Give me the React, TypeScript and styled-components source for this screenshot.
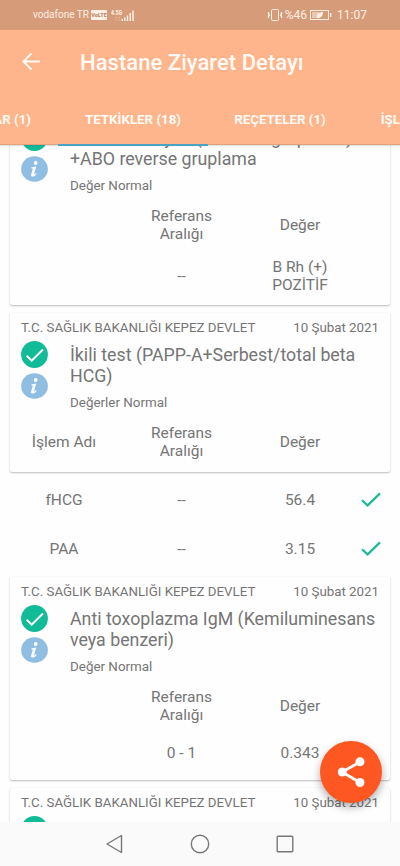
import React from "react";
import styled, { createGlobalStyle } from "styled-components";

const GlobalStyle = createGlobalStyle`
  * { box-sizing: border-box; }
  body { margin: 0; background: #fefefe; font-family: Roboto, sans-serif; color: #757575; }
`;

const Screen = styled.div`
  width: 400px;
  height: 866px;
  display: flex;
  flex-direction: column;
  overflow: hidden;
  position: relative;
  background: #fefefe;
`;

const StatusBar = styled.div`
  height: 30px;
  flex: none;
  display: flex;
  align-items: center;
  background: #d69b78;
  color: #fff0e6;
  padding: 0 33px;
`;

const StatusText = styled.span<{ $size: number; $spacing?: number }>`
  font-size: ${(p) => p.$size}px;
  letter-spacing: ${(p) => p.$spacing ?? 0}px;
  line-height: 30px;
  white-space: nowrap;
`;

const VolteBadge = styled.span`
  width: 16px;
  height: 10px;
  margin: 0 4px 0 2px;
  border-radius: 1px;
  background: #fff0e6;
  color: #c08b6c;
  font-size: 5.5px;
  font-weight: 900;
  line-height: 10px;
  text-align: center;
`;

const StatusIcons = styled.svg`
  display: block;
  flex: none;
`;

const Spacer = styled.div`
  flex: 1;
`;

const AppBar = styled.header`
  height: 115px;
  flex: none;
  background: #ffb58b;
  border-bottom: 1px solid #dfa27f;
  color: #fffaf5;
  position: relative;
  z-index: 1;
  box-shadow: 0 1px 1px rgba(90, 60, 40, 0.15);
`;

const TitleRow = styled.div`
  height: 64px;
  display: flex;
  align-items: center;
  padding-left: 20px;
`;

const PageTitle = styled.h1`
  margin: 0 0 0 37px;
  font-size: 22.1px;
  font-weight: 500;
  line-height: 28px;
  white-space: nowrap;
`;

const Tabs = styled.nav`
  height: 50px;
  display: grid;
  grid-template-columns: 31px 204px 90px 75px;
  align-items: center;
`;

const Tab = styled.span<{ $align: "right" | "center" }>`
  font-size: 13.3px;
  font-weight: 700;
  line-height: 20px;
  display: flex;
  white-space: nowrap;
  padding-top: 1px;
  justify-content: ${(p) => (p.$align === "right" ? "flex-end" : "center")};
`;

const Indicator = styled.div`
  position: absolute;
  left: 58px;
  bottom: -2px;
  width: 150px;
  height: 2px;
  background: #4aa3c2;
`;

const Content = styled.main`
  height: 677px;
  flex: none;
  overflow: hidden;
`;

const List = styled.div`
  margin-top: -49px;
  padding: 0 10px;
`;

const Card = styled.article<{ $height: number }>`
  height: ${(p) => p.$height}px;
  border-radius: 2px;
  background: #fefefe;
  box-shadow: 0 1px 2px rgba(0, 0, 0, 0.25), 0 0 1px rgba(0, 0, 0, 0.1);
  margin-bottom: 8px;
`;

const CardHead = styled.div`
  height: 28px;
  padding: 5px 11px 0 11px;
  display: flex;
  justify-content: space-between;
  font-size: 13.3px;
  line-height: 20px;
  white-space: nowrap;
`;

const CardBody = styled.div`
  height: 77px;
  display: grid;
  grid-template-columns: 27px 1fr;
  column-gap: 22px;
  padding-left: 11px;
`;

const Badges = styled.div`
  display: flex;
  flex-direction: column;
  gap: 5px;
`;

const TestName = styled.h2`
  margin: 3px 0 0;
  font-size: 17.8px;
  font-weight: 400;
  line-height: 21px;
  white-space: nowrap;
`;

const TestNote = styled.p`
  margin: 7px 0 0;
  font-size: 13.4px;
  line-height: 20px;
`;

const Row = styled.div<{ $height: number }>`
  height: ${(p) => p.$height}px;
  display: grid;
  grid-template-columns: 108px 127px 110px 32px;
  align-items: center;
`;

const Cell = styled.div`
  font-size: 15.5px;
  line-height: 18px;
  text-align: center;
  white-space: pre-line;
  display: flex;
  justify-content: center;
`;

const LooseRows = styled.div`
  padding: 3px 0;
  margin: -8px 0 1px;
`;

const ShareButton = styled.button`
  position: absolute;
  left: 320px;
  top: 741px;
  width: 62px;
  height: 62px;
  padding: 0;
  border: 0;
  border-radius: 50%;
  background: #ff5722;
  box-shadow: 0 4px 9px rgba(0, 0, 0, 0.32);
  z-index: 2;
`;

const NavBar = styled.footer`
  height: 44px;
  flex: none;
  background: #fafafa;
  display: grid;
  grid-template-columns: repeat(3, 85px);
  justify-content: center;
  align-items: center;
  justify-items: center;
`;

const OkBadge = () => (
  <svg width="27" height="27" viewBox="0 0 27 27">
    <circle cx="13.5" cy="13.5" r="13.4" fill="#12bb98" />
    <path d="M5.7 14.8l5 4.9L22 8.5" fill="none" stroke="#fff" strokeWidth="2" />
  </svg>
);

const InfoBadge = () => (
  <svg width="27" height="26" viewBox="0 0 27 26">
    <ellipse cx="13.5" cy="13" rx="13.4" ry="12.8" fill="#90bde2" />
    <circle cx="14.7" cy="7" r="1.9" fill="#fff" />
    <path d="M10.2 11.4c1.7-.2 3.3-.5 5-.9l-2.1 7.4c-.2.8.2.9.7.4l1.2-1.3.7.4c-1.3 2.1-2.6 3.2-4 3.2-1.5 0-1.9-1-1.5-2.4l1.4-4.8c.2-.8 0-1.1-1.5-1.1z" fill="#fff" />
  </svg>
);

const Check = () => (
  <svg width="20" height="16" viewBox="0 0 20 16">
    <path d="M1 8.2l5.6 5.2L19 1.4" fill="none" stroke="#20b795" strokeWidth="2.2" />
  </svg>
);

type Result = {
  name?: string;
  range: string;
  value: string;
  ok?: boolean;
  height: number;
};

const ResultRow = ({ name, range, value, ok, height }: Result) => (
  <Row $height={height}>
    <Cell>{name}</Cell>
    <Cell>{range}</Cell>
    <Cell>{value}</Cell>
    <Cell>{ok && <Check />}</Cell>
  </Row>
);

type TestProps = {
  title: string[];
  note: string;
  height: number;
  nameColumn?: string;
  result?: Result;
};

const TestCard = ({ title, note, height, nameColumn, result }: TestProps) => (
  <Card $height={height}>
    <CardHead>
      <span>T.C. SAĞLIK BAKANLIĞI KEPEZ DEVLET</span>
      <span>10 Şubat 2021</span>
    </CardHead>
    <CardBody>
      <Badges>
        <OkBadge />
        <InfoBadge />
      </Badges>
      <div>
        <TestName>
          {title[0]}
          <br />
          {title[1]}
        </TestName>
        <TestNote>{note}</TestNote>
      </div>
    </CardBody>
    <ResultRow name={nameColumn} range={"Referans\nAralığı"} value="Değer" height={48} />
    {result && <ResultRow {...result} />}
  </Card>
);

export default function App() {
  return (
    <Screen>
      <GlobalStyle />
      <StatusBar>
        <StatusText $size={10}>vodafone TR</StatusText>
        <VolteBadge>VoLTE</VolteBadge>
        <StatusIcons width="24" height="14" viewBox="0 0 24 14" fill="#fff0e6">
          <text x="0" y="6.500" fontSize="6.500" fontWeight="700" fontFamily="Roboto" textLength="11" lengthAdjust="spacingAndGlyphs">4.5G</text>
          <path d="M10.500 11H12v2h-1.500zM13 9.500h1.500V13H13zM15.700 7.500h1.500V13h-1.500zM18.500 5H20v8h-1.500zM21.300 2.500h1.500V13h-1.500z" />
          <path d="M4 9.500h2M7 9.500h2M4 12h2M7 12h2" stroke="#e5b497" fill="none" />
        </StatusIcons>
        <Spacer />
        <StatusIcons width="18" height="14" viewBox="0 0 18 14" fill="none" stroke="#fff0e6">
          <rect x="4.500" y="1.500" width="7" height="11" rx="1" />
          <path d="M1.500 4v2l1 1-1 1v2M14.500 4v2l-1 1 1 1v2" strokeWidth="1.300" />
        </StatusIcons>
        <StatusText $size={12}>%46</StatusText>
        <StatusIcons width="30" height="12" viewBox="0 0 30 12" fill="none" stroke="#fff0e6">
          <rect x="3.500" y="1.500" width="18" height="9" />
          <path d="M23.700 4v4" strokeWidth="1.300" />
          <path d="M5 3h7v6H5z" fill="#edc8b1" stroke="none" />
          <path d="M10 9c-1-4 2-6 6-6 0 4-2 6-6 6z" fill="#fff0e6" stroke="none" />
        </StatusIcons>
        <StatusText $size={12}>11:07</StatusText>
      </StatusBar>
      <AppBar>
        <TitleRow>
          <svg width="23" height="22" viewBox="0 0 23 22" fill="none" stroke="#fffaf5" strokeWidth="2">
            <path d="M20 10.500H3.500M11.500 2.400L3.500 10.500l8 8.100" />
          </svg>
          <PageTitle>Hastane Ziyaret Detayı</PageTitle>
        </TitleRow>
        <Tabs>
          <Tab $align="right">AR (1)</Tab>
          <Tab $align="center">TETKİKLER (18)</Tab>
          <Tab $align="center">REÇETELER (1)</Tab>
          <Tab $align="right">İŞL</Tab>
        </Tabs>
        <Indicator />
      </AppBar>
      <Content>
        <List>
          <TestCard
            title={["ABO + Rh tayini (Forward gruplama)", "+ABO reverse gruplama"]}
            note="Değer Normal"
            height={209}
            result={{ range: "--", value: "B Rh (+)\nPOZİTİF", height: 54 }}
          />
          <TestCard
            title={["İkili test (PAPP-A+Serbest/total beta", "HCG)"]}
            note="Değerler Normal"
            height={159}
            nameColumn="İşlem Adı"
          />
          <LooseRows>
            <ResultRow name="fHCG" range="--" value="56.4" ok height={49} />
            <ResultRow name="PAA" range="--" value="3.15" ok height={49} />
          </LooseRows>
          <TestCard
            title={["Anti toxoplazma IgM (Kemiluminesans", "veya benzeri)"]}
            note="Değer Normal"
            height={203}
            result={{ range: "0 - 1", value: "0.343", height: 46 }}
          />
          <TestCard title={["Anti toxoplazma IgG", "(Kemiluminesans)"]} note="Değer Normal" height={203} />
        </List>
      </Content>
      <ShareButton aria-label="Paylaş">
        <svg width="62" height="62" viewBox="0 0 62 62" fill="#fff">
          <path d="M40 21L22 31l18 10.500" fill="none" stroke="#fff" strokeWidth="2.800" />
          <circle cx="40" cy="20.700" r="4.500" />
          <circle cx="22.300" cy="31" r="4.500" />
          <circle cx="40" cy="41.500" r="4.500" />
        </svg>
      </ShareButton>
      <NavBar>
        <svg width="20" height="22" viewBox="0 0 20 22" fill="none" stroke="#777" strokeWidth="1.400">
          <path d="M16.500 2.500v17L2 11z" strokeLinejoin="round" />
        </svg>
        <svg width="20" height="20" viewBox="0 0 20 20" fill="none" stroke="#777" strokeWidth="1.400">
          <circle cx="10" cy="10" r="8.700" />
        </svg>
        <svg width="18" height="18" viewBox="0 0 18 18" fill="none" stroke="#777" strokeWidth="1.400">
          <rect x="1.200" y="1.200" width="15.600" height="15.600" rx="1" />
        </svg>
      </NavBar>
    </Screen>
  );
}
